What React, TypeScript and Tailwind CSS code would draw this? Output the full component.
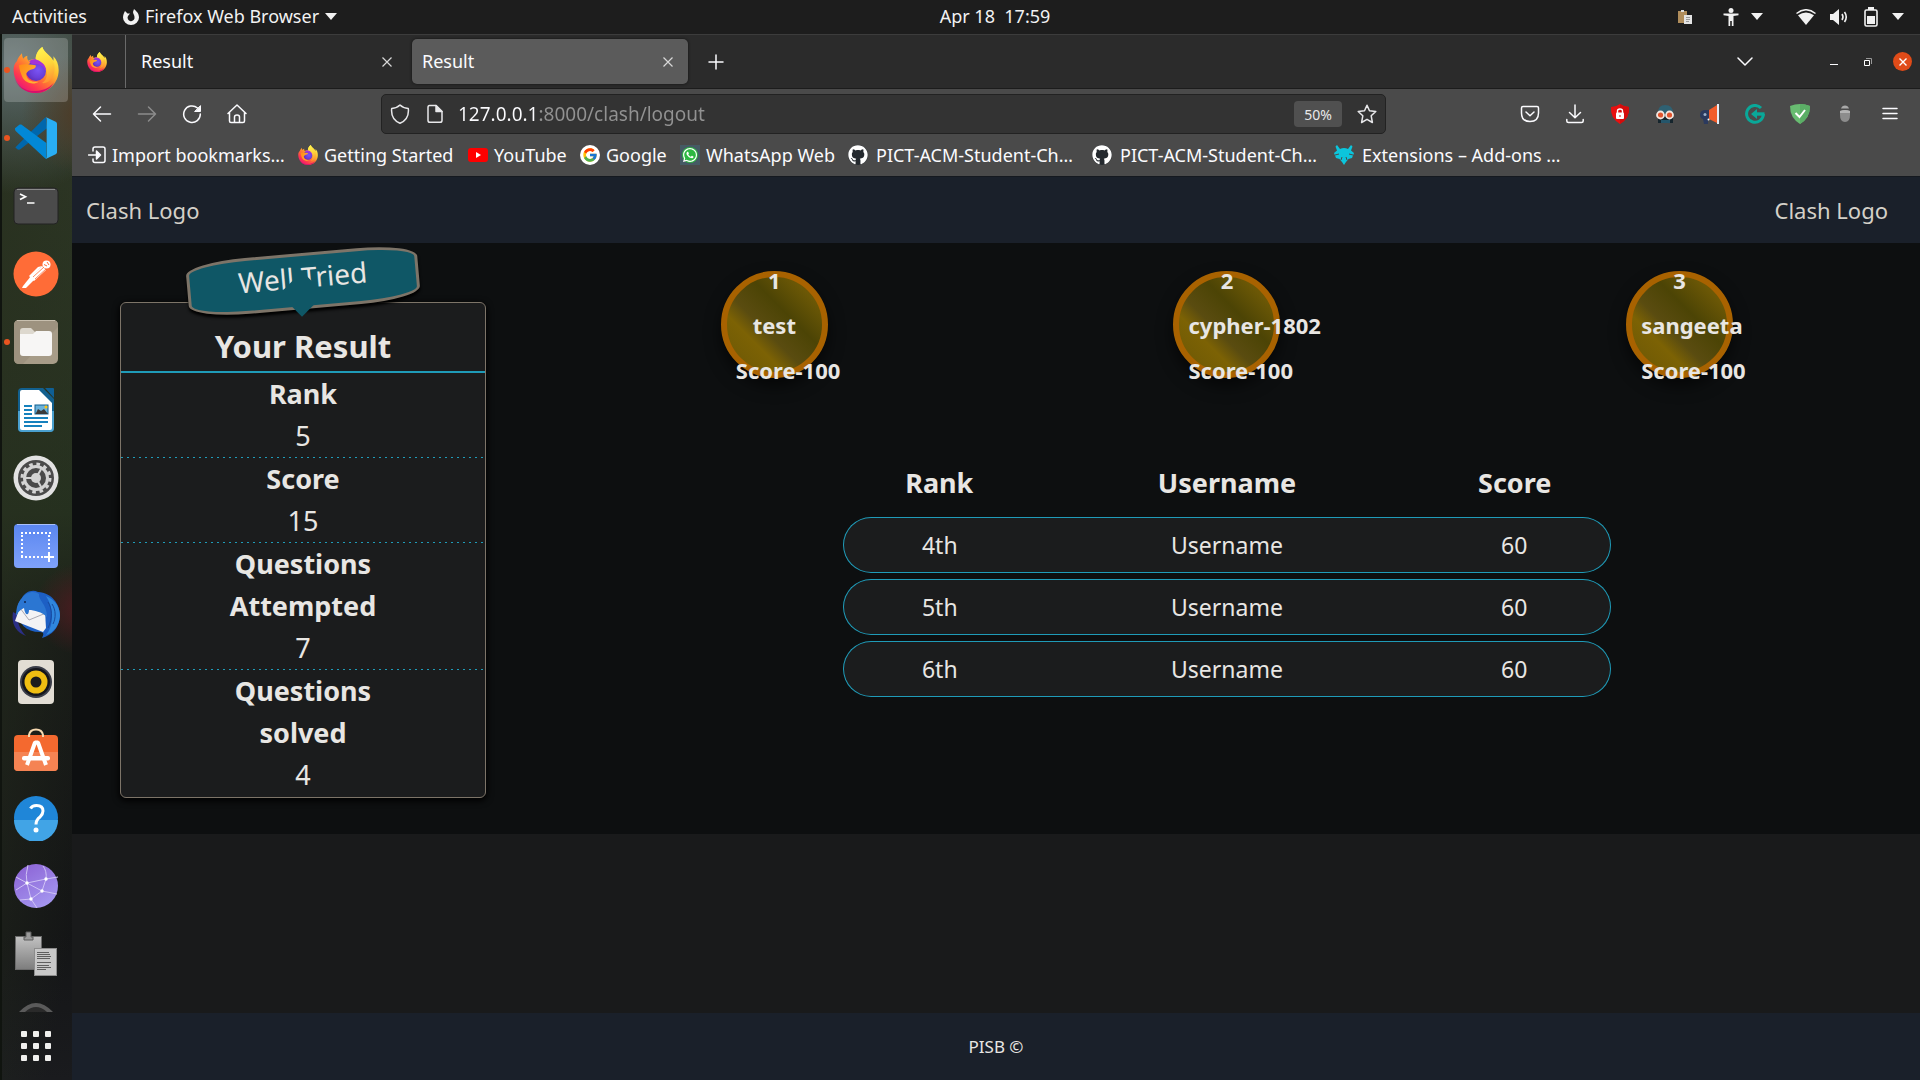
import React from "react";
import { FaGithub, FaWhatsapp } from "react-icons/fa";
import { FcGoogle } from "react-icons/fc";

const stroke = {
  fill: "none",
  stroke: "currentColor",
  strokeLinecap: "round" as const,
  strokeLinejoin: "round" as const,
};

/* ---------- logos ---------- */

function FirefoxLogo({ id, className }: { id: string; className: string }) {
  return (
    <svg viewBox="0 0 136 138" className={className} aria-hidden="true">
      <defs>
        <linearGradient id={id + "a"} x1="0.85" y1="0.1" x2="0.2" y2="0.95">
          <stop offset="0" stopColor="#fff44f" />
          <stop offset="0.3" stopColor="#ffc02f" />
          <stop offset="0.55" stopColor="#ff7b31" />
          <stop offset="0.8" stopColor="#ff3750" />
          <stop offset="1" stopColor="#e8157a" />
        </linearGradient>
        <radialGradient id={id + "b"} cx="0.6" cy="0.45" r="0.65">
          <stop offset="0" stopColor="#7a55f5" />
          <stop offset="0.6" stopColor="#6a3fd8" />
          <stop offset="1" stopColor="#5a2bb0" />
        </radialGradient>
        <linearGradient id={id + "c"} x1="0" y1="0" x2="1" y2="0.6">
          <stop offset="0" stopColor="#ff8a16" />
          <stop offset="1" stopColor="#ffb432" />
        </linearGradient>
        <linearGradient id={id + "d"} x1="0.4" y1="0" x2="0.6" y2="1">
          <stop offset="0" stopColor="#fff44f" />
          <stop offset="0.5" stopColor="#ffd43a" />
          <stop offset="1" stopColor="#ff9133" />
        </linearGradient>
      </defs>
      <path
        d="M26 19C18 28 13 34 11 42C2 50 0 62 1 72C3 108 32 138 68 138C106 138 136 108 136 70C136 52 130 38 120 28C121 34 121 38 120 41C112 24 93 19 87 0C76 8 67 20 67 37C58 36 50 38 46 41C42 38 41 32 42 26C36 28 32 31 30 35C27 30 26 24 26 19Z"
        fill={`url(#${id}a)`}
      />
      <path d="M4 92C12 118 38 134 68 132C94 131 112 120 122 106C112 126 92 138 68 138C36 138 10 118 4 92Z" fill="#d6106c" />
      <circle cx="68" cy="72" r="30" fill={`url(#${id}b)`} />
      <path d="M48 43C60 32 84 34 94 52C98 60 98 66 96 72C92 56 78 50 62 52C54 52 50 48 48 43Z" fill="#a433d8" />
      <path
        d="M67 37C67 20 76 8 87 0C93 19 112 24 122 50C130 84 108 112 86 108C102 100 104 80 98 64C92 48 80 42 67 37Z"
        fill={`url(#${id}d)`}
      />
      <path d="M17 55C30 50 46 52 66 55C70 57 66 65 60 66C48 68 42 74 38 80C40 100 56 106 76 104C62 114 36 110 27 90C22 78 18 68 17 55Z" fill={`url(#${id}c)`} />
    </svg>
  );
}

function VsCodeLogo() {
  return (
    <svg viewBox="0 0 126 126" className="size-[42px]" aria-hidden="true">
      <path d="M0 92L92 0L96 34L17 96C13 99 9 98 6 96L1 91Z" fill="#0067ac" />
      <path d="M0 34L12 24C15 22 18 22 21 24L94 78V126L90 124L2 42C0 39 0 36 0 34Z" fill="#0288d6" />
      <path d="M92 0L122 14C125 16 126 18 126 21V105C126 108 125 110 122 112L92 126C94 124 95 122 95 118V8C95 4 94 1 92 0Z" fill="#29aef4" />
    </svg>
  );
}

function TerminalLogo() {
  return (
    <svg viewBox="0 0 46 38" className="h-[38px] w-[46px]" aria-hidden="true">
      <rect x="1" y="1" width="44" height="36" rx="4" fill="#4b4b4b" stroke="#232323" />
      <path d="M4 2.5H42" stroke="#8a8a8a" />
      <path d="M7 7L12.5 9.8L7 12.5M14 16H21.5" fill="none" stroke="#fff" strokeWidth="1.7" />
    </svg>
  );
}

function PostmanLogo() {
  return (
    <svg viewBox="0 0 46 46" className="size-[46px]" aria-hidden="true">
      <circle cx="23" cy="23" r="22.5" fill="#ff6c37" />
      <circle cx="33.5" cy="13.5" r="4" fill="#fff" />
      <path d="M31 13.5L34 15M34 11L36 14" stroke="#ff6c37" strokeWidth="1" />
      <path d="M29 15L33 19L21 30L17 27Z" fill="#fff" />
      <path d="M25 16L29 15L18 27L16 25Z" fill="#fff" />
      <path d="M18 25L21 29L13 37H9L10 35Z" fill="#fff" />
      <path d="M20 26L31 16M22 28L33 18" stroke="#ff6c37" strokeWidth="0.8" />
    </svg>
  );
}

function FilesLogo() {
  return (
    <svg viewBox="0 0 46 46" className="size-[46px]" aria-hidden="true">
      <rect x="1" y="1" width="44" height="44" rx="5" fill="#a79c88" />
      <path d="M1 6Q1 1 6 1H40Q45 1 45 6V8L10 45H6Q1 45 1 40Z" fill="#9d927f" />
      <path d="M4 1.5H42" stroke="#c8bfae" />
      <path d="M7 12Q7 9 10 9H18L22 13H36V20H7Z" fill="#ddd8ce" />
      <path d="M7 15H20L23 12H36Q39 12 39 15V34Q39 37 36 37H10Q7 37 7 34Z" fill="#f7f6f5" />
    </svg>
  );
}

function WriterLogo() {
  return (
    <svg viewBox="0 0 38 46" className="h-[46px] w-[38px]" aria-hidden="true">
      <path d="M5 1H26L37 12V41Q37 45 33 45H5Q1 45 1 41V5Q1 1 5 1Z" fill="#12608f" />
      <path d="M1 24H37V41Q37 45 33 45H5Q1 45 1 41Z" fill="#4aa0cf" />
      <path d="M5 3H22L35 16V41Q35 43 33 43H5Q3 43 3 41V5Q3 3 5 3Z" fill="#fff" />
      <path d="M28 1H36Q37 1 37 2V11Z" fill="#0f5f95" />
      <path d="M7 19H15M7 23H15M7 27H15M7 31H31M7 35H31M7 39H25" stroke="#1681bd" strokeWidth="2" />
      <rect x="18" y="18" width="13" height="9" fill="#6bb3dc" stroke="#12608f" />
      <path d="M18.5 27L21 22L24 24L27 22L31 27Z" fill="#3a3a3a" />
      <circle cx="29" cy="20" r="1.5" fill="#ffc20e" />
    </svg>
  );
}

function SettingsLogo() {
  return (
    <svg viewBox="0 0 46 46" className="size-[46px]" aria-hidden="true">
      <circle cx="23" cy="23" r="22.5" fill="#e2e2e2" />
      <circle cx="23" cy="23" r="18" fill="#4b4b4b" />
      <circle cx="23" cy="23" r="14" fill="none" stroke="#d4d4d4" strokeWidth="3" strokeDasharray="3.6 3.73" />
      <circle cx="23" cy="23" r="11.5" fill="none" stroke="#d4d4d4" strokeWidth="3" />
      <circle cx="23" cy="23" r="5" fill="#d4d4d4" />
      <path d="M23 23L13 23M23 23L28 14.3M23 23L28 31.7" stroke="#d4d4d4" strokeWidth="2" />
    </svg>
  );
}

function ScreenshotLogo() {
  return (
    <svg viewBox="0 0 46 46" className="size-[46px]" aria-hidden="true">
      <defs>
        <linearGradient id="shot" x1="0" y1="0" x2="0" y2="1">
          <stop offset="0" stopColor="#5a86f0" />
          <stop offset="1" stopColor="#7fa2fa" />
        </linearGradient>
      </defs>
      <rect x="1" y="1" width="44" height="44" rx="4" fill="url(#shot)" />
      <path d="M4 1.5H42" stroke="#a9c0fb" />
      <path d="M8 10H38M8 34H31M9 12V33M36 12V28" stroke="#fff" strokeWidth="2" strokeDasharray="2 2" fill="none" />
      <path d="M36 29V39M31 34H41" stroke="#fff" strokeWidth="2" />
    </svg>
  );
}

function ThunderbirdLogo() {
  return (
    <svg viewBox="0 0 48 48" className="size-12" aria-hidden="true">
      <path d="M10 8C13 2 20 -1 26 2C40 3 48 14 48 26C47 38 40 45 30 48C32 44 32 42 28 42C14 42 6 34 5 20C6 14 7 12 10 8Z" fill="#1d5fc4" />
      <path d="M34 6C44 10 48 18 48 26C47 36 42 42 34 45C42 36 42 18 34 6Z" fill="#2f86dd" />
      <path d="M1 22C-1 34 4 42 14 46C8 40 5 32 5 24Z" fill="#2b2f86" />
      <path d="M8 17L15 15L33 21L34 38L31 42L3 31Z" fill="#f3f3f5" />
      <path d="M8 18L17 30L34 23" fill="none" stroke="#a9a9b3" />
      <path d="M10 8C14 2 22 0 27 4C26 10 35 14 35 27C30 22 22 20 17 20C17 26 13 26 12 18C8 20 6 22 4 26C4 18 6 12 10 8Z" fill="#2b76d2" />
      <path d="M36 12C40 18 41 28 36 38M40 14C44 20 44 28 41 34" stroke="#174a9e" fill="none" />
      <circle cx="13" cy="12" r="1" fill="#10254d" />
    </svg>
  );
}

function RhythmboxLogo() {
  return (
    <svg viewBox="0 0 38 46" className="h-[46px] w-[38px]" aria-hidden="true">
      <rect x="1" y="1" width="36" height="44" rx="4" fill="#e2ddd4" />
      <circle cx="19" cy="23" r="16" fill="#3a3d48" />
      <circle cx="19" cy="23" r="14" fill="#15161c" />
      <circle cx="19" cy="23" r="11.5" fill="#f0be12" />
      <circle cx="19" cy="23" r="5.5" fill="#1c1c1c" />
    </svg>
  );
}

function SoftwareLogo() {
  return (
    <svg viewBox="0 0 46 44" className="h-11 w-[46px]" aria-hidden="true">
      <rect x="1" y="7" width="44" height="36" rx="4" fill="#f4692f" />
      <path d="M1 24H45V39Q45 43 41 43H5Q1 43 1 39Z" fill="#f58353" />
      <path d="M16 9V7Q17 1.5 23 1.5Q29 1.5 30 7V9" fill="none" stroke="#f6d9b0" strokeWidth="2" />
      <path d="M14 37L22 14.5H25L33 37" fill="none" stroke="#fff" strokeWidth="4" strokeLinejoin="bevel" />
      <rect x="9" y="28" width="28" height="4.5" rx="2" fill="#fff" />
    </svg>
  );
}

function HelpLogo() {
  return (
    <svg viewBox="0 0 46 46" className="size-[46px]" aria-hidden="true">
      <circle cx="23" cy="23" r="22" fill="#1f86d8" />
      <path d="M1 25H45A22 22 0 0 1 1 25Z" fill="#41a4e6" />
      <path d="M17.5 13.5Q19 10.5 23.5 10.5Q30 10.5 30 16Q30 19 27 22Q23 25 23 29.5" fill="none" stroke="#fff" strokeWidth="3" />
      <circle cx="23" cy="35" r="2.5" fill="#fff" />
    </svg>
  );
}

function NetworkLogo() {
  return (
    <svg viewBox="0 0 46 46" className="size-[46px]" aria-hidden="true">
      <defs>
        <linearGradient id="net" x1="0" y1="0" x2="0.6" y2="1">
          <stop offset="0" stopColor="#8a5fd3" />
          <stop offset="1" stopColor="#a495ef" />
        </linearGradient>
      </defs>
      <circle cx="23" cy="23" r="22" fill="url(#net)" />
      <path d="M15 2Q12 12 14 20L3 27M14 20L33 16L45 14M33 16Q34 8 30 3M14 20L29 28L44 31M33 16L29 28L18 36L7 37M14 20Q16 28 18 36L24 45M3 14L14 20" fill="none" stroke="#cfc3f5" strokeWidth="1" />
      <g fill="#fff">
        <circle cx="14" cy="20" r="1.7" />
        <circle cx="33" cy="16" r="1.7" />
        <circle cx="29" cy="28" r="1.7" />
        <circle cx="18" cy="36" r="1.7" />
      </g>
    </svg>
  );
}

function ClipboardLogo() {
  return (
    <svg viewBox="0 0 44 46" className="h-[46px] w-11" aria-hidden="true">
      <defs>
        <linearGradient id="clip" x1="0" y1="0" x2="0" y2="1">
          <stop offset="0" stopColor="#c2c2c2" />
          <stop offset="1" stopColor="#7d7d7d" />
        </linearGradient>
      </defs>
      <rect x="1.5" y="5.5" width="26" height="33" fill="url(#clip)" stroke="#6b6b6b" />
      <path d="M10 9V6H12V1H17V6H19V9Z" fill="#9a9a9a" stroke="#5c5c5c" />
      <rect x="20.5" y="17.5" width="22" height="27" fill="#c8c8c8" stroke="#8d8d8d" />
      <path d="M23 21.5H35M23 23.5H36M23 25.5H37M23 27.5H36M23 31.5H37M23 34.5H35M23 36.5H37M23 38.5H32" stroke="#5f5f5f" />
    </svg>
  );
}

const dockItems: { label: string; running?: boolean; active?: boolean; icon: React.ReactNode }[] = [
  { label: "Firefox", running: true, active: true, icon: <FirefoxLogo id="dock" className="size-[46px]" /> },
  { label: "Visual Studio Code", running: true, icon: <VsCodeLogo /> },
  { label: "Terminal", icon: <TerminalLogo /> },
  { label: "Postman", icon: <PostmanLogo /> },
  { label: "Files", running: true, icon: <FilesLogo /> },
  { label: "Writer", icon: <WriterLogo /> },
  { label: "Settings", icon: <SettingsLogo /> },
  { label: "Screenshot", icon: <ScreenshotLogo /> },
  { label: "Thunderbird", icon: <ThunderbirdLogo /> },
  { label: "Rhythmbox", icon: <RhythmboxLogo /> },
  { label: "Software", icon: <SoftwareLogo /> },
  { label: "Help", icon: <HelpLogo /> },
  { label: "Network", icon: <NetworkLogo /> },
  { label: "Clipboard", icon: <ClipboardLogo /> },
];

/* ---------- desktop shell ---------- */

function Caret() {
  return (
    <svg viewBox="0 0 12 7" className="h-[7px] w-3 shrink-0" aria-hidden="true">
      <path d="M0 0H12L6 7Z" fill="currentColor" />
    </svg>
  );
}

function TopBar() {
  return (
    <header className="flex h-[34px] shrink-0 items-center bg-[#1d1d1d] px-3 pb-px text-[18px] text-[#f2f2f2]">
      <div className="flex flex-1 items-center gap-9">
        <button type="button">Activities</button>
        <button type="button" className="flex items-center gap-1.5">
          <svg viewBox="0 0 16 16" className="size-4" aria-hidden="true">
            <path d="M2 2L4.5 4.5L7 4.5L5 7A3.5 3.5 0 1 0 11.5 8C11.5 6 10 5 10 3L11 0C13 2 16 4 16 8.5A8 7.5 0 0 1 0 8.5C0 6 1 4 2 2Z" fill="currentColor" />
          </svg>
          <span>Firefox Web Browser</span>
          <Caret />
        </button>
      </div>
      <button type="button" className="whitespace-pre pl-[74px]">Apr 18  17:59</button>
      <div className="flex flex-1 items-center justify-end pr-1">
        <button type="button" aria-label="Clipboard manager">
          <svg viewBox="0 0 16 16" className="size-4" aria-hidden="true">
            <rect x="1" y="2" width="9" height="12" fill="#b08d5b" />
            <rect x="4" y="1" width="3" height="2" fill="#ddd" />
            <rect x="7" y="6" width="8" height="9" fill="#e4e4e4" />
            <path d="M9 8.5H13M9 10.5H13M9 12.5H12" stroke="#999" />
          </svg>
        </button>
        <button type="button" aria-label="Accessibility" className="ml-[30px] flex items-center gap-3">
          <svg viewBox="0 0 16 18" className="h-[18px] w-4" aria-hidden="true">
            <circle cx="8" cy="2.500" r="2.500" fill="currentColor" />
            <path d="M0.5 5.5H15.5V7.3L10.5 8V18H8.8V13H7.2V18H5.5V8L0.5 7.3Z" fill="currentColor" />
          </svg>
          <Caret />
        </button>
        <button type="button" aria-label="System menu" className="ml-[33px] flex items-center">
          <svg viewBox="0 0 20 16" className="h-4 w-5" aria-hidden="true">
            <path d="M0.5 4.5Q10 -3 19.5 4.5" fill="none" stroke="currentColor" strokeWidth="1.5" />
            <path d="M2 6.3Q10 0.5 18 6.3L10 16Z" fill="currentColor" />
          </svg>
          <svg viewBox="0 0 20 18" className="ml-3.5 h-[18px] w-5" aria-hidden="true">
            <path d="M0 6H3L9 1V17L3 12H0Z" fill="currentColor" />
            <path d="M12 6Q14 9 12 12M14.5 4Q18 9 14.5 14" fill="none" stroke="currentColor" strokeWidth="1.6" />
          </svg>
          <svg viewBox="0 0 14 20" className="ml-3.5 h-5 w-3.5" aria-hidden="true">
            <path d="M4 0H10V3H4Z" fill="currentColor" />
            <rect x="1" y="3" width="12" height="16" rx="1.5" fill="none" stroke="currentColor" strokeWidth="1.6" />
            <rect x="3" y="9" width="8" height="8" fill="currentColor" />
          </svg>
          <span className="ml-3.5 flex">
            <Caret />
          </span>
        </button>
      </div>
    </header>
  );
}

function Dock() {
  return (
    <nav
      aria-label="Dock"
      className="flex w-18 shrink-0 flex-col border-l-2 border-[#10140f] bg-[radial-gradient(circle_at_80px_80px,#4e3b26_0,transparent_60px),radial-gradient(circle_at_78px_575px,#4a1c20_0,transparent_46px),radial-gradient(circle_at_10px_30px,#5b6a6b_0,transparent_130px),linear-gradient(100deg,#28301f_0,transparent_90%),linear-gradient(#3a4034_0,#2d3826_200px,#24301f_480px,#151716_600px,#141516_900px,#1a1b1e_1046px)] pt-0.5"
    >
      <ul>
        {dockItems.map((item) => (
          <li key={item.label} className="relative h-17 py-0.5 pl-0.5 pr-1">
            {item.running && <span className="absolute left-0.5 top-[31px] size-1.5 rounded-full bg-[#e95420]" />}
            <button
              type="button"
              aria-label={item.label}
              className={
                item.active
                  ? "flex size-16 items-center justify-center rounded-[4px] bg-white/20"
                  : "flex size-16 items-center justify-center"
              }
            >
              {item.icon}
            </button>
          </li>
        ))}
      </ul>
      <div className="flex h-6 items-end justify-center overflow-hidden pr-0.5">
        <svg viewBox="0 0 34 10" className="h-2.5 w-[34px]" aria-hidden="true">
          <path d="M0 10Q17 -8 34 10Z" fill="#5a5a5a" />
          <path d="M6 10Q17 0 28 10Z" fill="#2a2a2a" />
        </svg>
      </div>
      <button type="button" aria-label="Show Applications" className="mr-0.5 mt-[19px] grid grid-cols-3 gap-1.5 self-center">
        {Array.from({ length: 9 }, (_, i) => (
          <span key={i} className="size-1.5 rounded-[1px] bg-[#f0f0ee]" />
        ))}
      </button>
    </nav>
  );
}

/* ---------- browser chrome ---------- */

function CloseX() {
  return (
    <svg viewBox="0 0 10 10" className="size-2.5" aria-hidden="true">
      <path d="M0.5 0.5L9.5 9.5M9.5 0.5L0.5 9.5" stroke="currentColor" strokeWidth="1.2" />
    </svg>
  );
}

function Tab({ title, active }: { title: string; active?: boolean }) {
  return (
    <div
      className={
        active
          ? "flex h-[45px] w-[276px] items-center justify-between rounded-[5px] bg-[#5b5b5b] pl-2.5 pr-[15px] shadow-[0_0_3px_#111]"
          : "flex h-[45px] w-[276px] items-center justify-between rounded-[5px] pl-2.5 pr-[15px]"
      }
    >
      <button type="button">{title}</button>
      <button type="button" aria-label="Close tab" className="text-[#d8d8d8]">
        <CloseX />
      </button>
    </div>
  );
}

function TabStrip() {
  return (
    <div className="flex h-[55px] items-center border-b border-t border-b-[#1c1c1c] border-t-[#3c3c3c] bg-[#2b2b2b] text-[18px]">
      <div className="flex w-[54px] items-center justify-center self-stretch border-r border-[#6a6a6a] pr-1">
        <FirefoxLogo id="pin" className="size-5" />
      </div>
      <div className="ml-[5px] flex gap-[5px]">
        <Tab title="Result" />
        <Tab title="Result" active />
      </div>
      <button type="button" aria-label="New tab" className="ml-5">
        <svg viewBox="0 0 16 16" className="size-4" {...stroke} strokeWidth="1.5">
          <path d="M8 1V15M1 8H15" />
        </svg>
      </button>
      <div className="ml-auto flex items-center pr-2">
        <button type="button" aria-label="List all tabs">
          <svg viewBox="0 0 16 16" className="size-4" {...stroke} strokeWidth="1.5">
            <path d="M1 4L8 11L15 4" />
          </svg>
        </button>
        <button type="button" aria-label="Minimize" className="ml-[77px]">
          <svg viewBox="0 0 8 8" className="size-2">
            <path d="M0 6.5H8" stroke="currentColor" />
          </svg>
        </button>
        <button type="button" aria-label="Restore" className="ml-[26px]">
          <svg viewBox="0 0 8 8" className="size-2">
            <path d="M0.5 2.5H5.5V7.5H0.5Z" fill="none" stroke="#fff" />
            <path d="M2 0.5H7.5V6" fill="none" stroke="#999" />
          </svg>
        </button>
        <button
          type="button"
          aria-label="Close window"
          className="ml-[21px] flex size-[19px] items-center justify-center rounded-full bg-[#e04b18] text-white"
        >
          <svg viewBox="0 0 8 8" className="size-2">
            <path d="M0.5 0.5L7.5 7.5M7.5 0.5L0.5 7.5" stroke="currentColor" strokeWidth="1.4" />
          </svg>
        </button>
      </div>
    </div>
  );
}

function ToolButton({ label, children, dim }: { label: string; children: React.ReactNode; dim?: boolean }) {
  return (
    <button
      type="button"
      aria-label={label}
      className={
        dim ? "flex h-10 w-[45px] items-center justify-center text-[#8c8c8c]" : "flex h-10 w-[45px] items-center justify-center text-[#fbfbfe]"
      }
    >
      {children}
    </button>
  );
}

function Glyph({ children }: { children: React.ReactNode }) {
  return (
    <svg viewBox="0 0 20 20" className="size-5 shrink-0" {...stroke} strokeWidth="1.5" aria-hidden="true">
      {children}
    </svg>
  );
}

function Toolbar() {
  return (
    <div className="flex items-center pl-[7px] pr-2 pt-[5px]">
      <div className="flex">
        <ToolButton label="Back">
          <Glyph>
            <path d="M18.500 10H1.500M8.500 3L1.500 10L8.500 17" />
          </Glyph>
        </ToolButton>
        <ToolButton label="Forward" dim>
          <Glyph>
            <path d="M1.500 10H18.500M11.500 3L18.500 10L11.500 17" />
          </Glyph>
        </ToolButton>
        <ToolButton label="Reload">
          <Glyph>
            <path d="M18.3 10A8.300 8.300 0 1 1 15.500 4" />
            <path d="M18.5 2V7.500H13Z" fill="currentColor" strokeWidth="1" />
          </Glyph>
        </ToolButton>
        <ToolButton label="Home">
          <Glyph>
            <path d="M1 9.5L10 1L19 9.5M2.5 8.5V17Q2.5 18.5 4 18.5H16Q17.5 18.5 17.5 17V8.5M7.5 18V13Q7.5 11 10 11Q12.5 11 12.5 13V18" />
          </Glyph>
        </ToolButton>
      </div>
      <div className="ml-[122px] mr-[121px] flex h-10 flex-1 items-center rounded-[5px] border border-[#222] bg-[#333] pl-2 pr-2 text-[#e8e8ea]">
        <Glyph>
          <path d="M10 1C12.5 3.5 15.5 4.2 18.3 4.5C19 11 16.5 16.5 10 19.3C3.5 16.5 1 11 1.7 4.5C4.5 4.2 7.5 3.5 10 1Z" />
        </Glyph>
        <span className="ml-[15px] flex">
          <Glyph>
            <path d="M4.5 1.5H11L17 7.5V16.5Q17 18.3 15 18.3H5Q3 18.3 3 16.5V3.5Q3 1.5 4.5 1.5Z" />
            <path d="M11 1.5V7.5H17Z" fill="currentColor" />
          </Glyph>
        </span>
        <input
          type="text"
          aria-label="Address"
          defaultValue="127.0.0.1:8000/clash/logout"
          className="ml-[13px] min-w-0 flex-1 bg-[linear-gradient(to_right,#fbfbfe_82px,#929292_82px)] bg-clip-text text-[19px] text-transparent outline-none"
        />
        <button type="button" className="flex h-[26px] w-12 items-center justify-center rounded-[4px] bg-[#505050] text-[14px]">
          50%
        </button>
        <button type="button" aria-label="Bookmark this page" className="ml-[15px]">
          <Glyph>
            <path d="M10 1.2L12.5 6.8L18.8 7.5L14.2 11.8L15.4 18.5L10 15.3L4.6 18.5L5.8 11.8L1.2 7.5L7.5 6.8Z" />
          </Glyph>
        </button>
      </div>
      <div className="flex">
        <ToolButton label="Pocket">
          <Glyph>
            <path d="M3 2.5H17Q18.5 2.5 18.5 4V9Q18.5 17.5 10 17.5Q1.5 17.5 1.5 9V4Q1.5 2.5 3 2.5ZM6 8L10 11.8L14 8" />
          </Glyph>
        </ToolButton>
        <ToolButton label="Downloads">
          <Glyph>
            <path d="M10 1V13.5M4.5 8.5L10 13.8L15.5 8.5M1.8 15.5V17Q1.8 18.5 3.5 18.5H16.5Q18.2 18.5 18.2 17V15.5" />
          </Glyph>
        </ToolButton>
        <ToolButton label="Privacy lock">
          <svg viewBox="0 0 20 20" className="size-5">
            <path d="M10 0Q14 3 19 3Q20 14 10 20Q0 14 1 3Q6 3 10 0Z" fill="#e81010" />
            <path d="M10 0Q14 3 19 3Q20 14 10 20Z" fill="#d40c0c" />
            <rect x="6" y="8.5" width="8" height="6.5" rx="1" fill="#fff" />
            <path d="M7.5 9V7Q7.5 5 10 5Q12.5 5 12.5 7V9" fill="none" stroke="#fff" strokeWidth="1.4" />
            <rect x="9.5" y="11" width="1" height="2" fill="#d40c0c" />
          </svg>
        </ToolButton>
        <ToolButton label="Spy">
          <svg viewBox="0 0 20 20" className="size-5">
            <path d="M3 9Q3 1 10 1Q18 1 18 9Z" fill="#2f6173" />
            <path d="M3 9H18V19H3Z" fill="#15252d" />
            <path d="M6 16H15V19H6Z" fill="#25566b" />
            <circle cx="5.5" cy="11" r="3.5" fill="#e0542e" stroke="#f2e6df" strokeWidth="1.8" />
            <circle cx="14.5" cy="11" r="3.5" fill="#e0542e" stroke="#f2e6df" strokeWidth="1.8" />
          </svg>
        </ToolButton>
        <ToolButton label="Megaphone">
          <svg viewBox="0 0 20 20" className="size-5">
            <path d="M0 11Q0 7 4 6H9V15H8V20H4L3 15Q0 14 0 11Z" fill="#2b3a5e" />
            <path d="M9 6L17 1V19L9 15Z" fill="#f25c2a" />
            <path d="M17 0H19V20H17Z" fill="#e4ecf5" />
            <circle cx="5" cy="10.5" r="1.5" fill="#9db0c8" />
            <circle cx="8.5" cy="15.5" r="1" fill="#fff" />
          </svg>
        </ToolButton>
        <ToolButton label="Grammarly">
          <svg viewBox="0 0 20 20" className="size-5" fill="none" stroke="#09a899">
            <path d="M16 4A8.400 8.400 0 1 0 18.400 10" strokeWidth="3" />
            <path d="M10.500 10H19.500" strokeWidth="3.400" />
            <path d="M6 10L12 5V15Z" fill="#09a899" stroke="none" />
          </svg>
        </ToolButton>
        <ToolButton label="AdGuard">
          <svg viewBox="0 0 20 20" className="size-5">
            <path d="M10 0Q15 0 20 2Q20 14 10 20Q0 14 0 2Q5 0 10 0Z" fill="#68bc71" />
            <path d="M10 0Q15 0 20 2Q20 14 10 20Z" fill="#5bae66" />
            <path d="M5.5 9L9.5 13L15 6" fill="none" stroke="#fff" strokeWidth="2" />
          </svg>
        </ToolButton>
        <ToolButton label="Bug">
          <svg viewBox="0 0 20 20" className="size-5">
            <path d="M6 4.5Q7 1.5 10 1.5Q13 1.5 14 4.5Z" fill="#a8a8a8" />
            <path d="M5 7Q10 5 15 7V11Q15 18 10 18Q5 18 5 11Z" fill="#8d8d8d" />
            <path d="M5 7Q10 5 15 7V9H5Z" fill="#b4b4b4" />
          </svg>
        </ToolButton>
        <ToolButton label="Menu">
          <Glyph>
            <path d="M3 4.5H17M3 9.5H17M3 14.5H17" />
          </Glyph>
        </ToolButton>
      </div>
    </div>
  );
}

function GithubMark() {
  return (
    <span className="mr-0.5 flex size-5 items-center justify-center rounded-full bg-[#24292e] text-white">
      <FaGithub className="size-5" />
    </span>
  );
}

const bookmarks: { title: string; width: string; icon: React.ReactNode }[] = [
  {
    title: "Import bookmarks…",
    width: "w-[210px]",
    icon: (
      <svg viewBox="0 0 18 20" className="h-5 w-[18px]" {...stroke} strokeWidth="1.5">
        <path d="M5 6V4Q5 2 7 2H15Q17 2 17 4V15.500Q17 17.500 15 17.500H7Q5 17.500 5 15.500V14M0.500 10H10" />
        <path d="M8.500 6L12.500 10L8.500 14Z" fill="currentColor" />
      </svg>
    ),
  },
  { title: "Getting Started", width: "w-[170px]", icon: <FirefoxLogo id="bm" className="size-5" /> },
  {
    title: "YouTube",
    width: "w-28",
    icon: (
      <svg viewBox="0 0 20 20" className="size-5">
        <rect y="3" width="20" height="14" rx="3" fill="#f00" />
        <path d="M8 7V13L13 10Z" fill="#fff" />
      </svg>
    ),
  },
  {
    title: "Google",
    width: "w-[100px]",
    icon: (
      <span className="flex size-5 items-center justify-center rounded-full bg-white">
        <FcGoogle className="size-4" />
      </span>
    ),
  },
  {
    title: "WhatsApp Web",
    width: "w-[168px]",
    icon: (
      <span className="flex size-5 items-center justify-center bg-[#455a64]">
        <span className="flex size-4 items-center justify-center rounded-full bg-[#2cb742] text-white">
          <FaWhatsapp className="size-4" />
        </span>
      </span>
    ),
  },
  { title: "PICT-ACM-Student-Ch…", width: "w-[244px]", icon: <GithubMark /> },
  { title: "PICT-ACM-Student-Ch…", width: "w-[242px]", icon: <GithubMark /> },
  {
    title: "Extensions – Add-ons …",
    width: "w-[250px]",
    icon: (
      <svg viewBox="0 0 20 20" className="mr-0.5 size-5">
        <path
          d="M3 0L6 4Q10 2 14 4L17 0L18.5 1.5L17 5.5L20 8L18 13L14.5 14L12 17L10 20L8 17L5.5 14L2 13L0 8L3 5.5L1.5 1.5Z"
          fill="#0cc5dc"
        />
        <path d="M1 10L5 9M19 10L15 9M7 15L8 12M13 15L12 12" stroke="#4a4a4a" />
      </svg>
    ),
  },
];

function Bookmarks() {
  return (
    <div className="flex h-[42px] items-center pl-4 text-[18px] leading-6">
      {bookmarks.map((b, i) => (
        <a key={i} href="#" className={"flex shrink-0 items-center gap-1.5 whitespace-nowrap " + b.width}>
          <span className="flex shrink-0">{b.icon}</span>
          <span>{b.title}</span>
        </a>
      ))}
    </div>
  );
}

/* ---------- page ---------- */

const results: { label: string[]; value: string }[] = [
  { label: ["Rank"], value: "5" },
  { label: ["Score"], value: "15" },
  { label: ["Questions", "Attempted"], value: "7" },
  { label: ["Questions", "solved"], value: "4" },
];

function ResultCard() {
  return (
    <section className="relative w-[366px] rounded-[6px] border border-[#7d7468] bg-[#1b1c1d] text-center shadow-[0_2px_6px_1px_#000]">
      <div className="absolute left-1/2 top-[-50px] z-10 w-[232px] -translate-x-1/2">
        <div className="flex h-14 -rotate-5 items-center justify-center rounded-[60px/13px] border-3 border-[#7d7468] bg-[#0f5766] pb-2 text-[28px] shadow-[0_3px_3px_#000]">
          Well Tried
        </div>
        <span className="absolute left-[99px] top-[25px] size-8 rotate-45 bg-[#0f5766]" />
      </div>
      <h1 className="border-b-2 border-[#1f9bb8] pb-[7px] pt-[25px] text-[31px] font-bold leading-9">Your Result</h1>
      <dl className="text-[27px] leading-[42px]">
        {results.map((r, i) => (
          <div
            key={i}
            className="bg-[repeating-linear-gradient(to_right,#1f9bb8_0,#1f9bb8_2px,transparent_2px,transparent_6px)] bg-[length:100%_1px] bg-bottom bg-no-repeat pb-px last:bg-none"
          >
            <dt className="font-bold">
              {r.label.map((line) => (
                <span key={line} className="block">
                  {line}
                </span>
              ))}
            </dt>
            <dd>{r.value}</dd>
          </div>
        ))}
      </dl>
    </section>
  );
}

const winners = ["test", "cypher-1802", "sangeeta"];

function Medals() {
  return (
    <ol className="grid grid-cols-3 justify-items-center pt-7">
      {winners.map((name, i) => (
        <li
          key={name}
          className="flex size-[107px] flex-col justify-center whitespace-nowrap rounded-full border-6 border-[#a86200] bg-[linear-gradient(45deg,#6a5606_0%,#7c6204_30%,#5a4c10_42%,#4c4405_62%,#6c5806_84%,#6a5608_100%)] px-[9px] pt-0.5 text-center text-[22px] font-bold leading-[45px] shadow-[0_8px_16px_#0009]"
        >
          <span>{i + 1}</span>
          <span>{name}</span>
          <span>Score-100</span>
        </li>
      ))}
    </ol>
  );
}

const rows = ["4th", "5th", "6th"];

function Leaderboard() {
  return (
    <table className="mx-auto mt-[71px] w-[56.5%] table-fixed border-separate border-spacing-x-0 border-spacing-y-1.5 text-center text-[23px]">
      <thead className="text-[27px]">
        <tr className="h-14">
          <th className="w-1/4">Rank</th>
          <th className="w-1/2">Username</th>
          <th className="w-1/4">Score</th>
        </tr>
      </thead>
      <tbody>
        {rows.map((rank) => (
          <tr key={rank} className="h-14">
            <td className="rounded-l-full border-y border-l border-[#1f9bb8] bg-[#1b1c1d]">{rank}</td>
            <td className="border-y border-[#1f9bb8] bg-[#1b1c1d]">Username</td>
            <td className="rounded-r-full border-y border-r border-[#1f9bb8] bg-[#1b1c1d]">60</td>
          </tr>
        ))}
      </tbody>
    </table>
  );
}

function ResultPage() {
  return (
    <div className="flex flex-1 flex-col bg-[#191a1b] text-[#e8e6e3]">
      <div className="flex h-[67px] items-center justify-between border-t border-[#15191f] bg-[#1a202a] pl-3.5 pr-8 text-[22px] text-[#d4d0c8]">
        <span>Clash Logo</span>
        <span>Clash Logo</span>
      </div>
      <main className="flex bg-[#0d0f10]">
        <div className="shrink-0 pb-9 pl-12 pr-[62px] pt-[59px]">
          <ResultCard />
        </div>
        <div className="min-w-0 flex-1 pr-3.5">
          <Medals />
          <Leaderboard />
        </div>
      </main>
      <footer className="mt-auto flex h-[67px] items-center justify-center bg-[#1a202a] text-[17px]">PISB ©</footer>
    </div>
  );
}

export default function App() {
  return (
    <div className="flex min-h-screen flex-col bg-black font-['Noto_Sans','Open_Sans',sans-serif]">
      <TopBar />
      <div className="flex flex-1">
        <Dock />
        <div className="flex min-w-0 flex-1 flex-col">
          <div className="bg-[#4a4a4a] text-[#fbfbfe]">
            <TabStrip />
            <Toolbar />
            <Bookmarks />
          </div>
          <ResultPage />
        </div>
      </div>
    </div>
  );
}
